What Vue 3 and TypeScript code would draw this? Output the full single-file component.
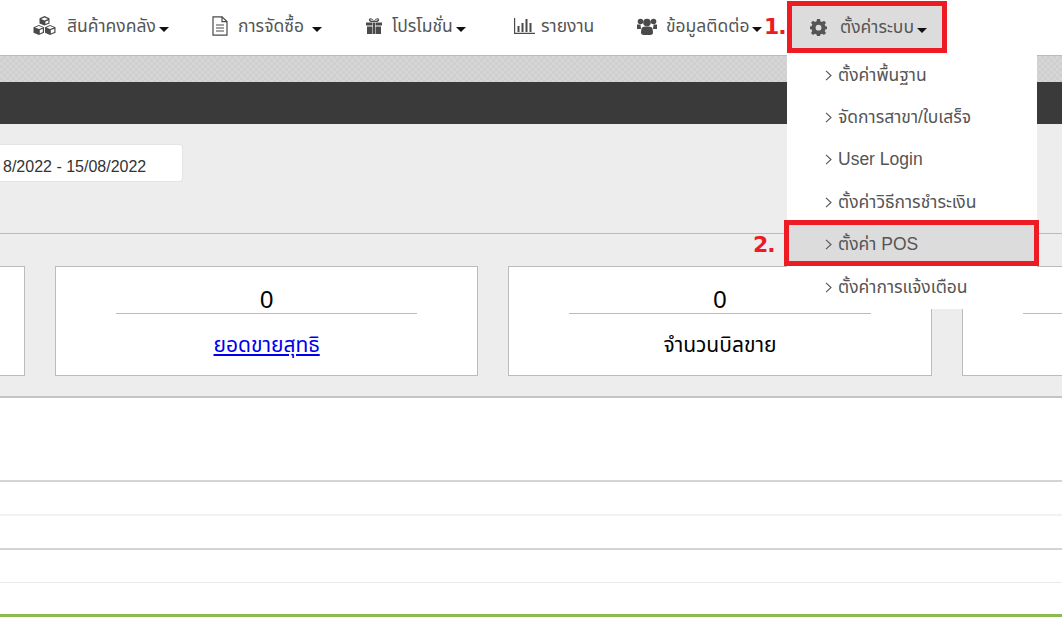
<script setup lang="ts">
interface NavItem { label: string; icon: string; width: number; caretGap: number; iconWidth: number }
const nav: NavItem[] = [
  { label: 'สินค้าคงคลัง', icon: 'cubes', width: 179, caretGap: 3, iconWidth: 34 },
  { label: 'การจัดซื้อ', icon: 'file', width: 154, caretGap: 8, iconWidth: 26 },
  { label: 'โปรโมชั่น', icon: 'gift', width: 148, caretGap: 3, iconWidth: 26 },
  { label: 'รายงาน', icon: 'chart', width: 123, caretGap: -1, iconWidth: 27 },
  { label: 'ข้อมูลติดต่อ', icon: 'users', width: 150, caretGap: 3, iconWidth: 29 }
]
const menu: string[] = ['ตั้งค่าพื้นฐาน', 'จัดการสาขา/ใบเสร็จ', 'User Login', 'ตั้งค่าวิธีการชำระเงิน', 'ตั้งค่า POS', 'ตั้งค่าการแจ้งเตือน']
</script>

<template>
  <div class="page">
    <header class="nav">
      <a v-for="item in nav" :key="item.label" class="nav-item" :style="{ width: item.width + 'px' }">
        <span class="icon-slot" :style="{ width: item.iconWidth + 'px' }">
          <svg v-if="item.icon === 'cubes'" width="23" height="20" viewBox="0 0 23 20" fill="#4a4a4a">
            <path d="M11.5 0 16.5 2.2V7.4L11.5 9.5 6.5 7.4V2.2Z" />
            <path d="M6 9 11 11.2V16.8L6 19 0.5 16.8V11.2Z" />
            <path d="M17 9 22.5 11.2V16.8L17 19 12 16.8V11.2Z" />
            <path fill="#fff" d="M8 3 11.5 4.4 15 3 11.5 1.6ZM2 11.5 6 13 10 11.5 6 10ZM13.5 11.5 17 13 21 11.5 17 10ZM12.4 5.6V8L15.4 6.8V4.4Z" />
            <path fill="#fff" d="M6.8 14V17.4L9.8 16.1V12.8ZM17.8 14V17.4L21.3 16.1V12.8Z" />
          </svg>
          <svg v-else-if="item.icon === 'file'" width="16" height="20" viewBox="0 0 16 20" fill="none" stroke="#4a4a4a" stroke-width="1.2">
            <path d="M1 .8H10L15 5.6V19.2H1Z" />
            <path d="M10 .8V5.6H15M4 9H12M4 12H12M4 15H12" />
          </svg>
          <svg v-else-if="item.icon === 'gift'" width="16" height="16" viewBox="0 0 16 16" fill="#4a4a4a">
            <path d="M0 4.500H6.500V7.500H0ZM9.500 4.500H16V7.500H9.500ZM1 8.500H6.500V16H1ZM9.500 8.500H15V16H9.500ZM7 4.500H9V16H7Z" />
            <path fill-rule="evenodd" d="M8 3.500C7 .5 3.800 -.5 3 1.200 2.300 2.800 4 4 6 4H10C12 4 13.700 2.800 13 1.200 12.200 -.5 9 .5 8 3.500ZM4.400 1.400C5.200 1 6.500 2 7 3 5.500 3.100 3.800 2.400 4.400 1.400ZM11.600 1.400C10.800 1 9.500 2 9 3 10.500 3.100 12.200 2.400 11.600 1.400Z" />
          </svg>
          <svg v-else-if="item.icon === 'chart'" width="21" height="16" viewBox="0 0 21 16" fill="#4a4a4a">
            <path d="M0 0H1.200V14.800H21V16H0Z" />
            <path d="M3.500 8H5.500V14H3.500ZM7.500 5H9.500V14H7.500ZM11.500 1H13.500V14H11.500ZM15.500 5H17.500V14H15.500Z" />
          </svg>
          <svg v-else width="20" height="17" viewBox="0 0 20 17" fill="#4a4a4a">
            <circle cx="3.500" cy="3.500" r="2.800" /><circle cx="16.500" cy="3.500" r="2.800" /><circle cx="10" cy="4.500" r="3.800" />
            <path d="M0 6.500H3.500L4 11H0ZM20 6.500H16.500L16 11H20Z" />
            <path d="M5 9.500C6 8 14 8 15 9.500 15.800 10.700 16 14 16 15 16 16.500 14 17 12.500 17H7.500C6 17 4 16.500 4 15 4 14 4.200 10.700 5 9.500Z" />
          </svg>
        </span>
        <span class="nav-label">{{ item.label }}</span>
        <span v-if="item.caretGap >= 0" class="caret" :style="{ marginLeft: item.caretGap + 'px' }"></span>
      </a>
      <a class="nav-item nav-active">
        <span class="icon-slot gear-slot">
          <svg width="17" height="17" viewBox="0 0 17 17" fill="#555">
            <path fill-rule="evenodd" d="M7 0H10L10.400 2.300 12.100 3 14 1.700 16 3.700 14.700 5.600 15.400 7.200 17 7.500V10L15.400 10.400 14.700 12 16 14 14 16 12.100 14.700 10.400 15.400 10 17H7L6.600 15.400 4.900 14.700 3 16 1 14 2.300 12 1.600 10.400 0 10V7.500L1.600 7.200 2.300 5.600 1 3.700 3 1.700 4.900 3 6.600 2.300ZM8.500 5.800A2.900 2.900 0 1 0 8.500 11.600 2.900 2.900 0 1 0 8.500 5.800Z" />
          </svg>
        </span>
        <span class="nav-label">ตั้งค่าระบบ</span>
        <span class="caret" :style="{ marginLeft: '3px' }"></span>
      </a>
    </header>

    <div class="stripe"></div>
    <div class="dark-bar"></div>

    <section class="filter">
      <div class="date-input">8/2022 - 15/08/2022</div>
    </section>

    <section class="stats">
      <article class="card"></article>
      <article class="card">
        <div class="value">0</div>
        <a class="card-link" href="#">ยอดขายสุทธิ</a>
      </article>
      <article class="card">
        <div class="value">0</div>
        <div class="card-title">จำนวนบิลขาย</div>
      </article>
      <article class="card">
        <div class="value"></div>
      </article>
    </section>

    <section class="table">
      <div class="row head"></div>
      <div class="row"></div>
      <div class="row head"></div>
      <div class="row last"></div>
    </section>
    <div class="green-rule"></div>

    <ul class="dropdown">
      <li v-for="entry in menu" :key="entry" class="drop-item" :class="{ selected: entry === 'ตั้งค่า POS' }">
        <svg class="chev" width="7" height="11" viewBox="0 0 7 11" fill="none" stroke="#555" stroke-width="1.100"><path d="M1 .8 6 5.500 1 10.200" /></svg>
        <span>{{ entry }}</span>
      </li>
    </ul>
    <span class="step step-one">1.</span>
    <span class="step step-two">2.</span>
  </div>
</template>

<style scoped>
.page {
  position: relative;
  width: 1062px;
  height: 625px;
  overflow: hidden;
  background: #fff;
  font-family: "Liberation Sans", "Noto Sans Thai", "DejaVu Sans", sans-serif;
  font-size: 17.500px;
}
.nav {
  display: flex;
  align-items: flex-start;
  height: 55px;
  padding-left: 33px;
  box-sizing: border-box;
}
.nav-item {
  display: flex;
  align-items: center;
  height: 52px;
  color: #555;
  white-space: nowrap;
}
.icon-slot {
  display: flex;
  align-items: center;
  flex: none;
}
.caret {
  width: 0;
  height: 0;
  margin-top: 7px;
  border-left: 5px solid transparent;
  border-right: 5px solid transparent;
  border-top: 5px solid #111;
}
.nav-active {
  box-sizing: border-box;
  width: 160px;
  height: 52px;
  margin-top: 1px;
  padding-left: 18px;
  border: 5px solid #ed1c24;
  background: #dcdcdc;
}
.gear-slot { width: 30px; }
.stripe {
  height: 27px;
  border-top: 1px solid #bbb;
  box-sizing: border-box;
  background-color: #d6d6d6;
  background-image: conic-gradient(#cfcfcf 25%, transparent 0 50%, #cfcfcf 0 75%, transparent 0);
  background-size: 6px 6px;
}
.dark-bar {
  height: 42px;
  background: #3a3a3a;
}
.filter {
  box-sizing: border-box;
  height: 110px;
  padding-top: 20px;
  background: #ededed;
  border-bottom: 1px solid #bbb;
}
.date-input {
  box-sizing: border-box;
  width: 183px;
  height: 38px;
  padding-left: 3px;
  border: 1px solid #e4e4e4;
  border-left: 0;
  border-radius: 0 4px 4px 0;
  background: #fff;
  color: #333;
  font-size: 16px;
  line-height: 44px;
}
.stats {
  display: flex;
  gap: 30px;
  box-sizing: border-box;
  height: 164px;
  padding-top: 32px;
  margin-left: -398.300px;
  width: 1900px;
  background: #ededed;
  border-bottom: 2px solid #c4c4c4;
}
.card {
  box-sizing: border-box;
  width: 423.300px;
  height: 110px;
  padding: 17px 60px 0;
  border: 1px solid #bbb;
  background: #fff;
  text-align: center;
}
.value {
  height: 29px;
  border-bottom: 1px solid #bbb;
  color: #000;
  font-size: 24px;
  line-height: 32px;
}
.card-link,
.card-title {
  display: block;
  margin-top: 18px;
  font-size: 21px;
  line-height: 26px;
}
.card-link { color: #00e; text-decoration: underline; }
.card-title { color: #000; }
.table {
  padding-top: 82px;
}
.row {
  box-sizing: border-box;
  height: 34px;
  border-top: 2px solid #f2f2f2;
}
.row.head { border-top-color: #d4d4d4; }
.row.last { height: 32px; border-top-width: 1px; border-top-color: #ebebeb; }
.green-rule {
  height: 3px;
  background: #8bbb50;
}
.dropdown {
  position: absolute;
  top: 54px;
  left: 787px;
  width: 250px;
  height: 255px;
  box-sizing: border-box;
  margin: 0;
  padding: 0;
  list-style: none;
  background: #fff;
}
.drop-item {
  position: relative;
  display: flex;
  align-items: center;
  gap: 6px;
  height: 42.400px;
  padding-left: 38px;
  color: #555;
  white-space: nowrap;
}
.drop-item.selected { background: #dcdcdc; }
.drop-item.selected::after {
  content: "";
  position: absolute;
  left: -3px;
  right: -2px;
  top: -4px;
  bottom: 0;
  border: 5px solid #ed1c24;
}
.step {
  position: absolute;
  color: #ed1c24;
  font-family: "DejaVu Sans", sans-serif;
  font-size: 22px;
  font-weight: 700;
  letter-spacing: -1px;
  line-height: 24px;
}
.step-one { left: 764px; top: 15px; }
.step-two { left: 753px; top: 233px; }
</style>
